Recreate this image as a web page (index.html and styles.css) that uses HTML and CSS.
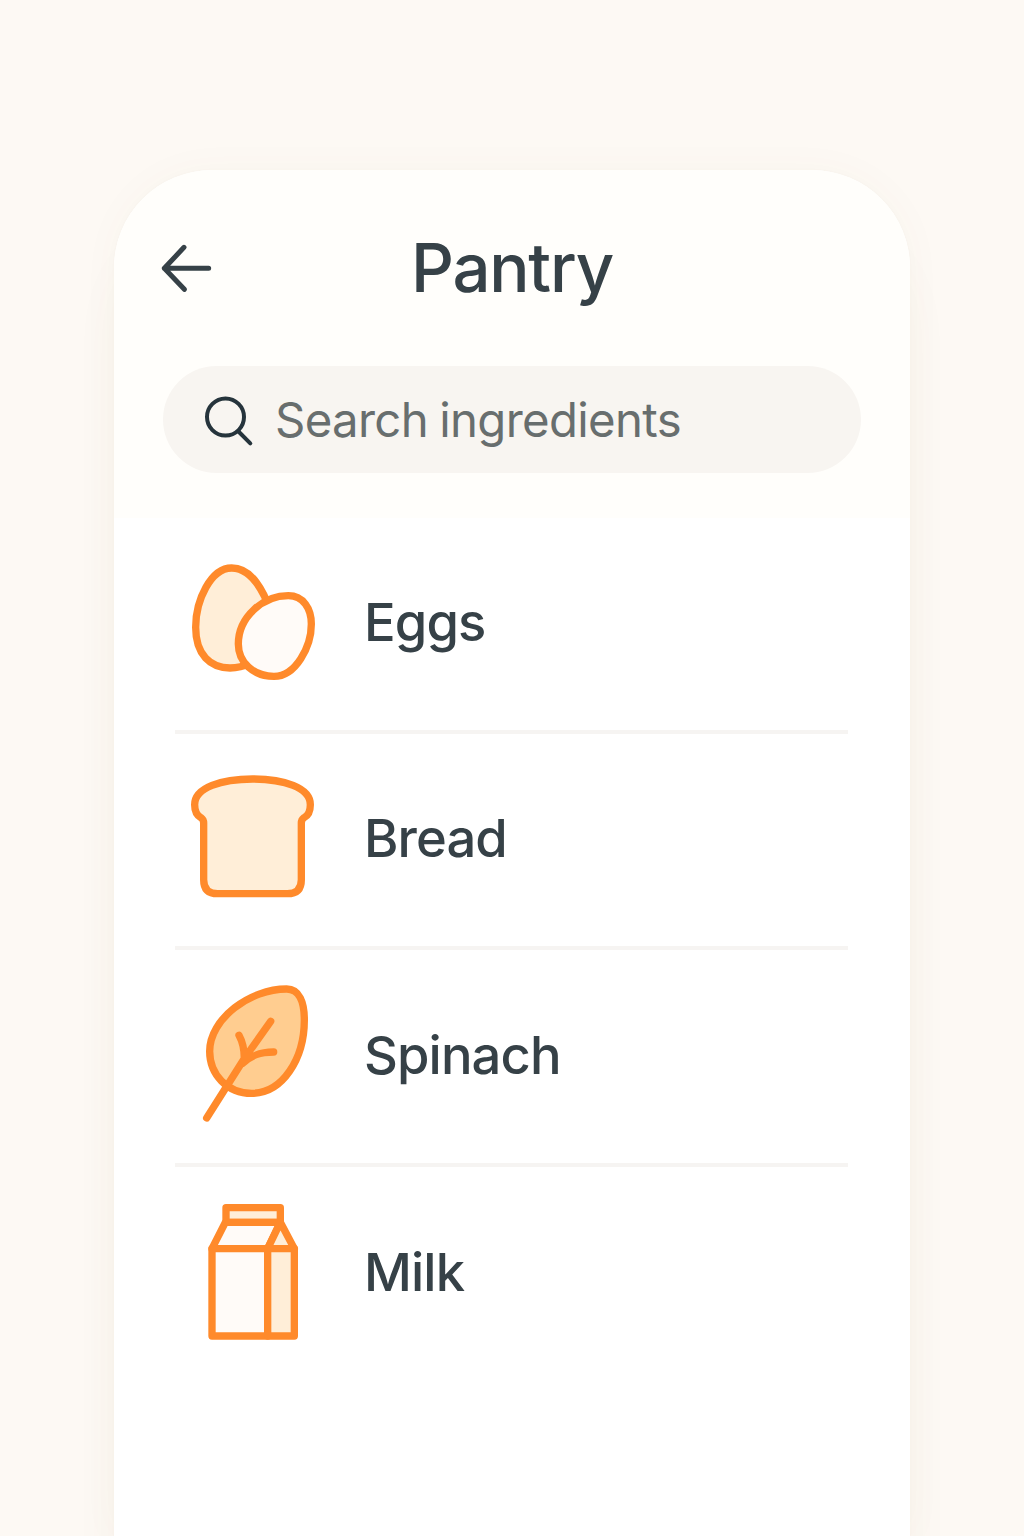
FILE: index.html
```html
<!DOCTYPE html>
<html lang="en">
<head>
<meta charset="utf-8">
<title>Pantry</title>
<link rel="stylesheet" href="styles.css">
</head>
<body>
<main class="card">
  <header class="header">
    <div class="title-bar">
      <button class="back" aria-label="Back">
        <svg class="back-icon" viewBox="30 69 162 150"><path d="M176 145H43M102 82L43 145L103 208"/></svg>
      </button>
      <h1 class="title">Pantry</h1>
    </div>
    <div class="search">
      <svg class="search-icon" viewBox="0 0 56 56"><circle cx="25.500" cy="25" r="18.500"/><path d="M38.500 39.500L50.300 51.300"/></svg>
      <span class="placeholder">Search ingredients</span>
    </div>
  </header>
  <ul class="list">
    <li class="item">
      <svg class="icon" viewBox="-15 -9 465 450">
        <path class="peach" d="M155 54C93 54 47 150 47 232C47 315 92 354 150 354C175 354 190 350 210 340L275 190C250 120 215 54 155 54Z"/>
        <path class="cream" d="M325 137C370 137 394 176 394 222C394 290 347 379 282 379C220 379 175 337 175 282C175 200 250 137 325 137Z"/>
      </svg>
      <span class="name">Eggs</span>
    </li>
    <li class="item">
      <svg class="icon" viewBox="-15 -4 465 450">
        <path class="peach" d="M218 44C125 44 44 70 44 121C44 143 52 154 63 160Q71 166 71 176V346Q71 388 113 388H322Q364 388 364 346V176Q364 166 372 160C384 154 391 143 391 121C391 70 311 44 218 44Z"/>
      </svg>
      <span class="name">Bread</span>
    </li>
    <li class="item">
      <svg class="icon" viewBox="-45 14 465 450">
        <path class="leaf" d="M290 41C328 41 343 82 343 134C343 250 278 354 185 354C112 354 59 298 59 228C59 130 180 41 290 41Z"/>
        <path class="line" d="M50 428L164 248L242 138M147 180C158 200 163 218 163 250M251 230C210 230 184 240 158 264"/>
      </svg>
      <span class="name">Spinach</span>
    </li>
    <li class="item">
      <svg class="icon" viewBox="-60 6 465 450">
        <path class="peach" d="M93 38H256V82H93Z"/>
        <path class="cream" d="M91 82H256L218 161H51Z"/>
        <path class="peach" d="M256 82L298 161H218Z"/>
        <path class="cream" d="M51 161H218V423H51Z"/>
        <path class="peach" d="M218 161H298V423H218Z"/>
      </svg>
      <span class="name">Milk</span>
    </li>
  </ul>
</main>
</body>
</html>
```
FILE: styles.css
```css
* { box-sizing: border-box; }

body {
  margin: 0;
  height: 1536px;
  padding: 170px 114px 0;
  overflow: hidden;
  background: #fdf9f4;
  font-family: Inter, "Liberation Sans", sans-serif;
  color: #364147;
}

.card {
  height: 1366px;
  border-radius: 98px 98px 0 0;
  overflow: hidden;
  background: #fff;
  box-shadow: 0 0 3px rgba(120, 90, 60, .03), 0 0 40px rgba(120, 90, 60, .03), 0 60px 48px rgba(120, 90, 60, .04);
}

.header {
  height: 347.600px;
  background: #fffefb;
}

.title-bar {
  display: grid;
  grid-template-columns: 54px 1fr 54px;
  align-items: center;
  height: 196px;
  padding: 0 46px;
}

.back {
  width: 54px;
  height: 50px;
  padding: 0;
  border: 0;
  background: none;
}

.back-icon {
  display: block;
  width: 54px;
  height: 50px;
  fill: none;
  stroke: #364147;
  stroke-width: 15;
  stroke-linecap: round;
  stroke-linejoin: round;
}

.title {
  margin: 0;
  text-align: center;
  font-size: 67px;
  line-height: 80px;
  font-weight: 500;
  letter-spacing: -1.200px;
}

.search {
  display: flex;
  align-items: center;
  gap: 19px;
  height: 107px;
  margin: 0 49px;
  padding-left: 37px;
  border-radius: 54px;
  background: #f8f5f1;
}

.search-icon {
  width: 56px;
  height: 56px;
  fill: none;
  stroke: #26343c;
  stroke-width: 4;
  stroke-linecap: round;
}

.placeholder {
  font-size: 47.300px;
  letter-spacing: -.650px;
  word-spacing: -1.500px;
  color: #686e6e;
  white-space: nowrap;
}

.list {
  margin: 0 62px 0 61px;
  padding: 0;
  list-style: none;
}

.item {
  display: flex;
  align-items: center;
  gap: 34px;
  height: 216.400px;
  padding-bottom: 6.400px;
}

.item:not(:last-child) {
  padding-bottom: 4px;
  border-bottom: 4px solid #f6f4f2;
}

.icon {
  width: 155px;
  height: 150px;
  stroke: #ff8a2b;
  stroke-width: 22;
  stroke-linecap: round;
  stroke-linejoin: round;
}

.peach { fill: #ffeed8; }
.cream { fill: #fffbf8; }
.leaf { fill: #ffcd90; }
.line { fill: none; }

.name {
  font-size: 52.500px;
  line-height: 64px;
  font-weight: 500;
  letter-spacing: -.900px;
}
```
